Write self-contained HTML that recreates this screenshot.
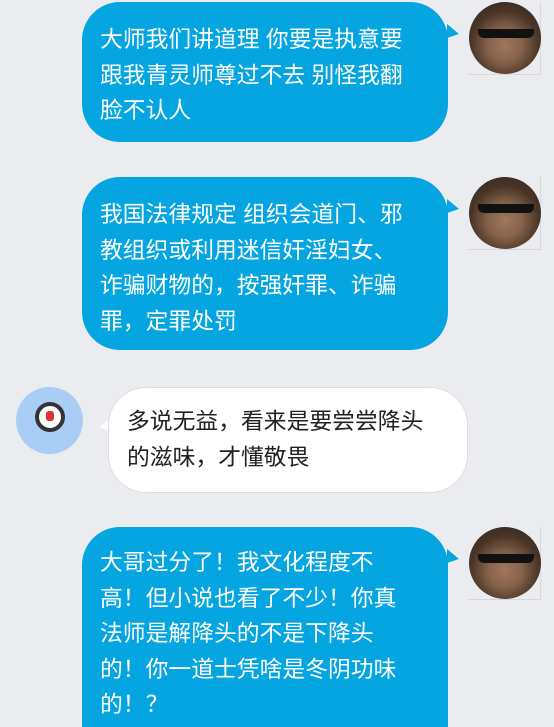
<!DOCTYPE html>
<html><head><meta charset="utf-8"><style>
html,body{margin:0;padding:0;}
body{width:554px;height:722px;background:#ebecf0;position:relative;overflow:hidden;font-family:"Liberation Sans","Noto Sans CJK SC",sans-serif;}
.b{position:absolute;border-radius:38px;font-size:22.8px;line-height:35.5px;box-sizing:border-box;padding:0 0 0 18px;}
.blue{background:#05a5e2;color:#fff;left:82px;width:366px;}
.white{background:#fff;color:#222;left:108px;width:360px;border:1px solid #dcdde0;}
.tr{position:absolute;width:0;height:0;border-left:12px solid #05a5e2;border-top:10px solid transparent;border-bottom:4px solid transparent;}
.av{position:absolute;width:72px;height:72px;border-radius:50%;overflow:hidden;
background:radial-gradient(circle at 50% 60%,#a0785c 0,#86634b 30%,#4a3628 60%,#2a201a 100%);}
.av .g{position:absolute;left:9px;top:27px;width:56px;height:9px;background:#111;border-radius:0 0 6px 6px;}
.frame{position:absolute;border-right:1px solid #d8d8d8;border-bottom:1px solid #d8d8d8;}
</style></head><body>

<div class="b blue" style="top:2px;height:140px;padding-top:20px;">大师我们讲道理 你要是执意要<br>跟我青灵师尊过不去 别怪我翻<br>脸不认人</div>
<div class="tr" style="left:447px;top:24px;"></div>
<div class="frame" style="left:468px;top:2px;width:72px;height:72px;"></div>
<div class="av" style="left:469px;top:2px;"><div class="g"></div></div>

<div class="b blue" style="top:177px;height:173px;padding-top:20px;">我国法律规定 组织会道门、邪<br>教组织或利用迷信奸淫妇女、<br>诈骗财物的，按强奸罪、诈骗<br>罪，定罪处罚</div>
<div class="tr" style="left:447px;top:199px;"></div>
<div class="frame" style="left:468px;top:177px;width:72px;height:72px;"></div>
<div class="av" style="left:469px;top:177px;"><div class="g"></div></div>

<div style="position:absolute;left:16px;top:387px;width:67px;height:67px;border-radius:50%;background:#a9cdf5;"></div>
<div style="position:absolute;left:35px;top:402px;width:30px;height:30px;border-radius:50%;background:#fff;border:4px solid #333;box-sizing:border-box;"></div>
<div style="position:absolute;left:46px;top:411px;width:8px;height:10px;background:#d33;border-radius:3px;"></div>
<div style="position:absolute;left:99px;top:419px;width:0;height:0;border-right:10px solid #fff;border-top:8px solid transparent;border-bottom:4px solid transparent;"></div>
<div class="b white" style="top:387px;height:106px;padding-top:16px;padding-left:18px;">多说无益，看来是要尝尝降头<br>的滋味，才懂敬畏</div>

<div class="b blue" style="top:527px;height:200px;padding-top:18px;border-radius:38px 38px 0 0;">大哥过分了！我文化程度不<br>高！但小说也看了不少！你真<br>法师是解降头的不是下降头<br>的！你一道士凭啥是冬阴功味<br>的！？</div>
<div class="tr" style="left:447px;top:549px;"></div>
<div class="frame" style="left:468px;top:527px;width:72px;height:72px;"></div>
<div class="av" style="left:469px;top:527px;"><div class="g"></div></div>

</body></html>
